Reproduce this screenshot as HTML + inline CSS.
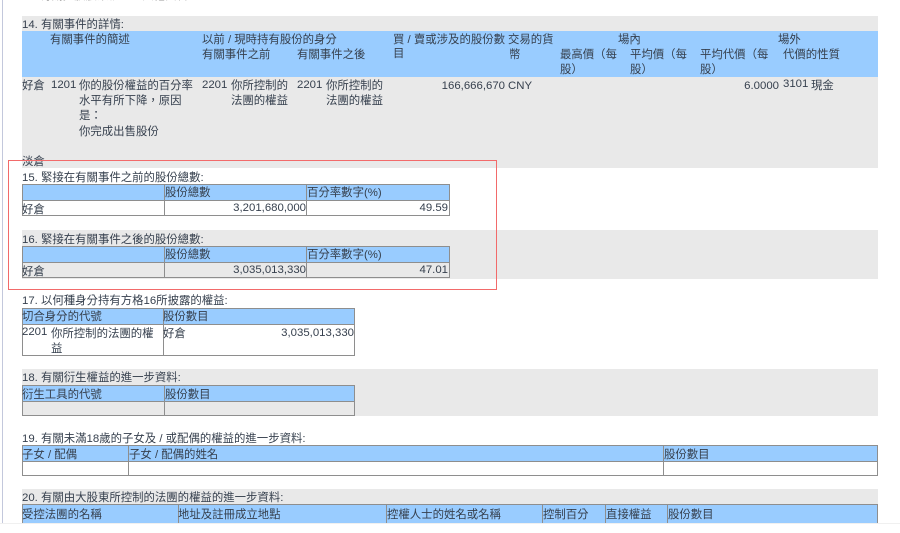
<!DOCTYPE html>
<html lang="zh-Hant"><head><meta charset="utf-8">
<style>
html,body{margin:0;padding:0;background:#fff}
body{width:900px;height:533px;overflow:hidden;position:relative}
#w{position:absolute;left:0;top:0;width:900px;height:533px;overflow:hidden;filter:blur(.35px);font:11.4px/15px "Liberation Sans","Noto Sans CJK TC",sans-serif;color:#36404e}
#w div{position:absolute}
.t{white-space:nowrap;transform:translateY(1px)}
.r{white-space:nowrap;text-align:right;transform:translateY(1px)}
.g{background:#e9e9e9}
.b{background:#99ccff}
.l{background:#8e8e8e}
</style></head><body><div id="w">
<div style="left:2px;top:0;width:1px;height:523px;background:#c3c8dc"></div>
<div class="t" style="left:40px;top:-12px;color:#333">有關控股股東權益的其他資料。</div>

<!-- 14 -->
<div class="g" style="left:22px;top:16px;width:856px;height:152px"></div>
<div class="b" style="left:22px;top:31px;width:856px;height:46px"></div>
<div class="t" style="left:22px;top:17px">14. 有關事件的詳情:</div>
<div class="t" style="left:50px;top:32px">有關事件的簡述</div>
<div class="t" style="left:202px;top:32px">以前 / 現時持有股份的身分</div>
<div class="t" style="left:202px;top:47px">有關事件之前</div>
<div class="t" style="left:297px;top:47px">有關事件之後</div>
<div class="t" style="left:393px;top:32px">買 / 賣或涉及的股份數</div>
<div class="t" style="left:393px;top:46px">目</div>
<div class="t" style="left:508px;top:32px">交易的貨</div>
<div class="t" style="left:509px;top:47px">幣</div>
<div class="t" style="left:618px;top:32px">場內</div>
<div class="t" style="left:560px;top:47px">最高價（每</div>
<div class="t" style="left:560px;top:62px">股）</div>
<div class="t" style="left:630px;top:47px">平均價（每</div>
<div class="t" style="left:630px;top:62px">股）</div>
<div class="t" style="left:700px;top:47px">平均代價（每</div>
<div class="t" style="left:700px;top:62px">股）</div>
<div class="t" style="left:778px;top:32px">場外</div>
<div class="t" style="left:783px;top:47px">代價的性質</div>

<div class="t" style="left:22px;top:78px">好倉</div>
<div class="t" style="left:51px;top:77px">1201</div>
<div class="t" style="left:79px;top:78px">你的股份權益的百分率</div>
<div class="t" style="left:79px;top:93px">水平有所下降，原因</div>
<div class="t" style="left:79px;top:108px">是：</div>
<div class="t" style="left:79px;top:124px">你完成出售股份</div>
<div class="t" style="left:202px;top:77px">2201</div>
<div class="t" style="left:231px;top:78px">你所控制的</div>
<div class="t" style="left:231px;top:93px">法團的權益</div>
<div class="t" style="left:297px;top:77px">2201</div>
<div class="t" style="left:326px;top:78px">你所控制的</div>
<div class="t" style="left:326px;top:93px">法團的權益</div>
<div class="r" style="right:395px;top:78px">166,666,670</div>
<div class="t" style="left:508px;top:78px">CNY</div>
<div class="r" style="right:121px;top:78px">6.0000</div>
<div class="t" style="left:783px;top:76px">3101</div>
<div class="t" style="left:811px;top:78px">現金</div>
<div class="t" style="left:22px;top:154px">淡倉</div>

<!-- 15 -->
<div class="t" style="left:22px;top:170px">15. 緊接在有關事件之前的股份總數:</div>
<div class="l" style="left:22px;top:184px;width:428px;height:32px"></div>
<div class="b" style="left:23px;top:185px;width:141px;height:15px"></div>
<div class="b" style="left:165px;top:185px;width:141px;height:15px"></div>
<div class="b" style="left:307px;top:185px;width:142px;height:15px"></div>
<div style="left:23px;top:201px;width:141px;height:14px;background:#fff"></div>
<div style="left:165px;top:201px;width:141px;height:14px;background:#fff"></div>
<div style="left:307px;top:201px;width:142px;height:14px;background:#fff"></div>
<div class="t" style="left:165px;top:185px">股份總數</div>
<div class="t" style="left:307px;top:185px">百分率數字(%)</div>
<div class="t" style="left:22px;top:202px">好倉</div>
<div class="r" style="right:594px;top:200px">3,201,680,000</div>
<div class="r" style="right:452px;top:200px">49.59</div>

<!-- 16 -->
<div class="g" style="left:22px;top:230px;width:856px;height:49px"></div>
<div class="t" style="left:22px;top:232px">16. 緊接在有關事件之後的股份總數:</div>
<div class="l" style="left:22px;top:246px;width:428px;height:32px"></div>
<div class="b" style="left:23px;top:247px;width:141px;height:15px"></div>
<div class="b" style="left:165px;top:247px;width:141px;height:15px"></div>
<div class="b" style="left:307px;top:247px;width:142px;height:15px"></div>
<div class="g" style="left:23px;top:263px;width:141px;height:14px"></div>
<div class="g" style="left:165px;top:263px;width:141px;height:14px"></div>
<div class="g" style="left:307px;top:263px;width:142px;height:14px"></div>
<div class="t" style="left:165px;top:247px">股份總數</div>
<div class="t" style="left:307px;top:247px">百分率數字(%)</div>
<div class="t" style="left:22px;top:264px">好倉</div>
<div class="r" style="right:594px;top:262px">3,035,013,330</div>
<div class="r" style="right:452px;top:262px">47.01</div>

<!-- 17 -->
<div class="t" style="left:22px;top:293px">17. 以何種身分持有方格16所披露的權益:</div>
<div class="l" style="left:22px;top:308px;width:333px;height:48px"></div>
<div class="b" style="left:23px;top:309px;width:140px;height:15px"></div>
<div class="b" style="left:164px;top:309px;width:190px;height:15px"></div>
<div style="left:23px;top:325px;width:140px;height:30px;background:#fff"></div>
<div style="left:164px;top:325px;width:190px;height:30px;background:#fff"></div>
<div class="t" style="left:22px;top:309px">切合身分的代號</div>
<div class="t" style="left:163px;top:309px">股份數目</div>
<div class="t" style="left:22px;top:324px">2201</div>
<div class="t" style="left:51px;top:326px">你所控制的法團的權</div>
<div class="t" style="left:51px;top:341px">益</div>
<div class="t" style="left:163px;top:326px">好倉</div>
<div class="r" style="right:546px;top:325px">3,035,013,330</div>

<!-- 18 -->
<div class="g" style="left:22px;top:369px;width:856px;height:47px"></div>
<div class="t" style="left:22px;top:370px">18. 有關衍生權益的進一步資料:</div>
<div class="l" style="left:22px;top:385px;width:333px;height:31px"></div>
<div class="b" style="left:23px;top:386px;width:141px;height:15px"></div>
<div class="b" style="left:165px;top:386px;width:189px;height:15px"></div>
<div class="g" style="left:23px;top:402px;width:141px;height:13px"></div>
<div class="g" style="left:165px;top:402px;width:189px;height:13px"></div>
<div class="t" style="left:22px;top:387px">衍生工具的代號</div>
<div class="t" style="left:165px;top:387px">股份數目</div>

<!-- 19 -->
<div class="t" style="left:22px;top:431px">19. 有關未滿18歲的子女及 / 或配偶的權益的進一步資料:</div>
<div class="l" style="left:22px;top:445px;width:856px;height:31px"></div>
<div class="b" style="left:23px;top:446px;width:105px;height:15px"></div>
<div class="b" style="left:129px;top:446px;width:534px;height:15px"></div>
<div class="b" style="left:664px;top:446px;width:213px;height:15px"></div>
<div style="left:23px;top:462px;width:105px;height:13px;background:#fff"></div>
<div style="left:129px;top:462px;width:534px;height:13px;background:#fff"></div>
<div style="left:664px;top:462px;width:213px;height:13px;background:#fff"></div>
<div class="t" style="left:22px;top:447px">子女 / 配偶</div>
<div class="t" style="left:129px;top:447px">子女 / 配偶的姓名</div>
<div class="t" style="left:664px;top:447px">股份數目</div>

<!-- 20 -->
<div class="g" style="left:22px;top:489px;width:856px;height:15px"></div>
<div class="t" style="left:22px;top:490px">20. 有關由大股東所控制的法團的權益的進一步資料:</div>
<div class="l" style="left:22px;top:504px;width:856px;height:19px"></div>
<div class="b" style="left:23px;top:505px;width:155px;height:18px"></div>
<div class="b" style="left:179px;top:505px;width:207px;height:18px"></div>
<div class="b" style="left:387px;top:505px;width:155px;height:18px"></div>
<div class="b" style="left:543px;top:505px;width:62px;height:18px"></div>
<div class="b" style="left:606px;top:505px;width:61px;height:18px"></div>
<div class="b" style="left:668px;top:505px;width:209px;height:18px"></div>
<div class="t" style="left:22px;top:507px">受控法團的名稱</div>
<div class="t" style="left:178px;top:507px">地址及註冊成立地點</div>
<div class="t" style="left:387px;top:507px">控權人士的姓名或名稱</div>
<div class="t" style="left:543px;top:507px">控制百分</div>
<div class="t" style="left:606px;top:507px">直接權益</div>
<div class="t" style="left:668px;top:507px">股份數目</div>

<div style="left:0;top:523px;width:900px;height:10px;background:#fff"></div>
<div style="left:0;top:523px;width:900px;height:1px;background:#f0f0f0"></div>

<!-- red annotation box -->
<div style="left:8px;top:160px;width:487px;height:128px;border:1px solid #f26a6a"></div>
</div></body></html>
